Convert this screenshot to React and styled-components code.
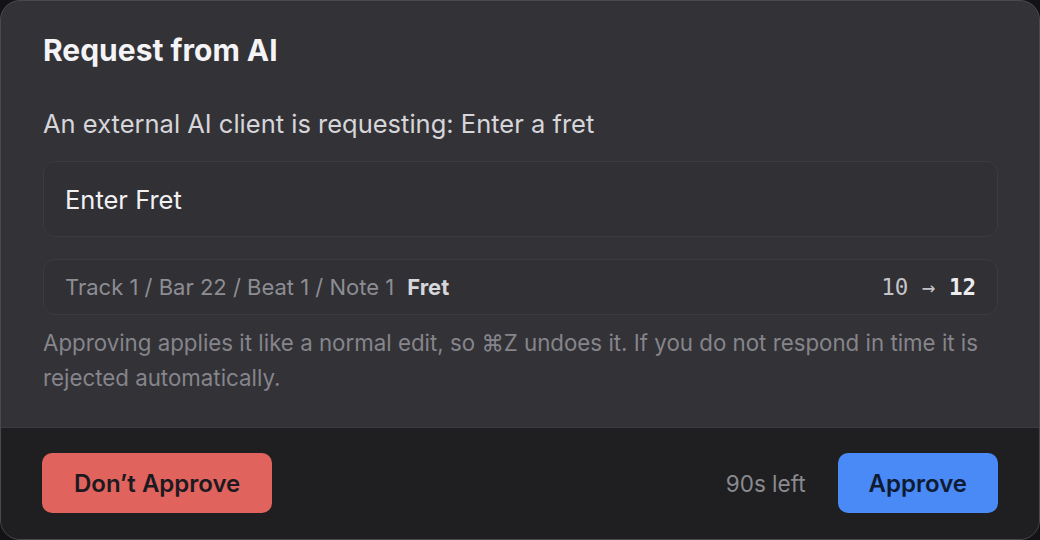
import React from "react";
import styled, { createGlobalStyle } from "styled-components";

const Global = createGlobalStyle`
  html, body { margin: 0; padding: 0; background: #131316; }
  * { box-sizing: border-box; }
  body { font-family: Inter, "Noto Sans", sans-serif; -webkit-font-smoothing: antialiased; }
`;

const Dialog = styled.div`
  width: 1040px;
  height: 540px;
  display: flex;
  flex-direction: column;
  background: #333237;
  border: 1px solid #4a494f;
  border-radius: 20px;
  overflow: hidden;
`;

const Body = styled.div`
  flex: 1;
  display: flex;
  flex-direction: column;
  padding: 33px 41px 0 42px;
`;

const Title = styled.h1`
  margin: 0;
  font-size: 30px;
  line-height: 32px;
  font-weight: 700;
  color: #f4f4f6;
`;

const Description = styled.p`
  margin: 43px 0 0;
  font-size: 25.5px;
  line-height: 30px;
  color: #d6d6da;
`;

const Panel = styled.div`
  display: flex;
  align-items: center;
  margin-top: ${(p) => p.$gap}px;
  height: ${(p) => p.$height}px;
  padding: 0 21px;
  background: #303035;
  border: 1px solid #3b3b40;
  border-radius: 12px;
`;

const Action = styled.span`
  font-size: 25.5px;
  color: #f1f1f3;
`;

const Path = styled.span`
  font-size: 22px;
  color: #8d8d93;
`;

const Field = styled.span`
  margin-left: 13px;
  font-size: 22px;
  font-weight: 700;
  color: #d7d7db;
`;

const Change = styled.span`
  margin-left: auto;
  font-family: "DejaVu Sans Mono", "Liberation Mono", monospace;
  font-size: 22.5px;
  color: #c4c4c8;
  white-space: pre;
`;

const NewValue = styled.span`
  font-weight: 700;
  color: #ececef;
`;

const Note = styled.p`
  margin: 10px 0 0;
  font-size: 22.3px;
  line-height: 35px;
  color: #85858b;
`;

const Footer = styled.div`
  display: flex;
  align-items: center;
  gap: 32px;
  height: 112px;
  padding: 0 41px 1px 41px;
  background: #1f1f21;
  border-top: 1px solid #3c3b40;
`;

const Button = styled.button`
  height: 60px;
  padding: 0 ${(p) => p.$pad}px;
  border: none;
  border-radius: 10px;
  background: ${(p) => p.$bg};
  color: ${(p) => p.$fg};
  font-family: Inter, "Noto Sans", sans-serif;
  font-size: 24px;
  font-weight: 600;
  cursor: pointer;
`;

const Spacer = styled.div`
  flex: 1;
`;

const Countdown = styled.span`
  font-size: 22.5px;
  color: #8a8a90;
`;

export default function App() {
  return (
    <>
      <Global />
      <Dialog>
        <Body>
          <Title>Request from AI</Title>
          <Description>An external AI client is requesting: Enter a fret</Description>
          <Panel $gap={22} $height={76}>
            <Action>Enter Fret</Action>
          </Panel>
          <Panel $gap={22} $height={56}>
            <Path>Track 1 / Bar 22 / Beat 1 / Note 1</Path>
            <Field>Fret</Field>
            <Change>
              {"10 → "}
              <NewValue>12</NewValue>
            </Change>
          </Panel>
          <Note>
            Approving applies it like a normal edit, so ⌘Z undoes it. If you do not respond in time it is
            rejected automatically.
          </Note>
        </Body>
        <Footer>
          <Button $bg="#e0645d" $fg="#1c1a20" $pad={32}>Don’t Approve</Button>
          <Spacer />
          <Countdown>90s left</Countdown>
          <Button $bg="#4a8af6" $fg="#0f1a33" $pad={31}>Approve</Button>
        </Footer>
      </Dialog>
    </>
  );
}
